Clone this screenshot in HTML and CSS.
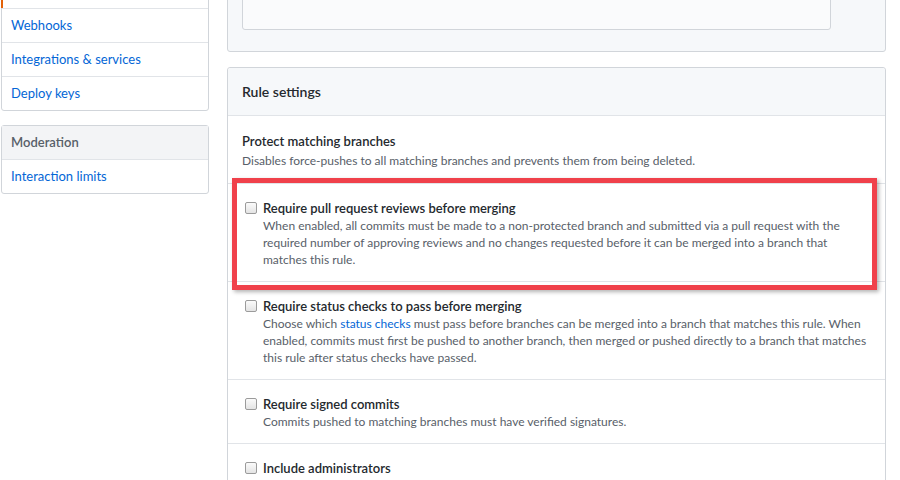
FILE: index.html
```html
<!DOCTYPE html>
<html lang="en">
<head>
<meta charset="utf-8">
<title>Branch protection rule</title>
<link rel="stylesheet" href="styles.css">
</head>
<body>
<div class="page">
  <nav class="sidebar">
    <div class="menu">
      <a class="menu-item selected stub" aria-label="Branches"></a>
      <a class="menu-item">Webhooks</a>
      <a class="menu-item">Integrations &amp; services</a>
      <a class="menu-item">Deploy keys</a>
    </div>
    <div class="menu menu-spaced">
      <h3 class="menu-heading">Moderation</h3>
      <a class="menu-item">Interaction limits</a>
    </div>
  </nav>

  <main class="content">
    <div class="box box-muted">
      <div class="input"></div>
    </div>

    <div class="box rules">
      <div class="box-header"><h3>Rule settings</h3></div>

      <div class="rule-intro">
        <div class="rule-title">Protect matching branches</div>
        <p class="rule-note">Disables force-pushes to all matching branches and prevents them from being deleted.</p>
      </div>

      <div class="rule">
        <span class="checkbox"></span>
        <div class="rule-body">
          <div class="rule-title">Require pull request reviews before merging</div>
          <p class="rule-note">When enabled, all commits must be made to a non-protected branch and submitted via a pull request with the required number of approving reviews and no changes requested before it can be merged into a branch that matches this rule.</p>
        </div>
      </div>

      <div class="rule">
        <span class="checkbox"></span>
        <div class="rule-body">
          <div class="rule-title">Require status checks to pass before merging</div>
          <p class="rule-note">Choose which <a class="link">status checks</a> must pass before branches can be merged into a branch that matches this rule. When enabled, commits must first be pushed to another branch, then merged or pushed directly to a branch that matches this rule after status checks have passed.</p>
        </div>
      </div>

      <div class="rule">
        <span class="checkbox"></span>
        <div class="rule-body">
          <div class="rule-title">Require signed commits</div>
          <p class="rule-note">Commits pushed to matching branches must have verified signatures.</p>
        </div>
      </div>

      <div class="rule">
        <span class="checkbox"></span>
        <div class="rule-body">
          <div class="rule-title">Include administrators</div>
        </div>
      </div>

      <div class="highlight"></div>
    </div>
  </main>
</div>
</body>
</html>
```

FILE: styles.css
```css
* { box-sizing: border-box; }

html, body {
  margin: 0;
  padding: 0;
  background: #ffffff;
  overflow: hidden;
}

body {
  font-family: Lato, "Liberation Sans", Arial, sans-serif;
  color: #24292e;
  width: 900px;
  height: 480px;
}

.page {
  display: flex;
  align-items: flex-start;
  margin-top: -20px;
  margin-left: 1px;
}

/* ---------- sidebar ---------- */
.sidebar {
  width: 208px;
  flex: none;
}

.menu {
  border: 1px solid #d1d5da;
  border-radius: 3px;
  background: #fff;
}

.menu-spaced { margin-top: 14px; }

.menu-item {
  position: relative;
  display: block;
  padding: 7px 9px;
  font-size: 13px;
  line-height: 19px;
  color: #0366d6;
  text-decoration: none;
  border-top: 1px solid #e1e4e8;
}

.menu > .menu-item:first-child { border-top: 0; }

.menu-item.stub {
  height: 27px;
  padding: 0;
}

.menu-item.selected::before {
  content: "";
  position: absolute;
  top: 0;
  bottom: 0;
  left: -1px;
  width: 2px;
  background: #e36209;
}

.menu-heading {
  margin: 0;
  padding: 7px 9px;
  font-size: 13px;
  line-height: 19px;
  font-weight: 600;
  color: #586069;
  background: #f3f4f6;
  border-bottom: 1px solid #e1e4e8;
}

.menu-heading + .menu-item { border-top: 0; }

/* ---------- content ---------- */
.content {
  width: 659px;
  margin-left: 18px;
  flex: none;
}

.box {
  border: 1px solid #d1d5da;
  border-radius: 3px;
  background: #fff;
}

.box-muted {
  background: #f6f8fa;
  padding: 15px 14px 21px;
}

.input {
  width: 589px;
  height: 34px;
  border: 1px solid #d1d5da;
  border-radius: 3px;
  background: #fafbfc;
}

.rules {
  position: relative;
  margin-top: 15px;
}

.box-header {
  padding: 14px 14px 13px;
  background: #f6f8fa;
  border-bottom: 1px solid #e1e4e8;
  border-radius: 3px 3px 0 0;
}

.box-header h3 {
  margin: 0;
  font-size: 14px;
  line-height: 20px;
  font-weight: 600;
}

.rule-intro {
  padding: 16px 14px 14px;
}

.rule-intro .rule-title { margin-bottom: 2px; }

.rule {
  display: flex;
  align-items: flex-start;
  padding: 15px 14px 13px;
  border-top: 1px solid #e1e4e8;
}

.checkbox {
  flex: none;
  width: 12px;
  height: 12px;
  margin: 3px 6px 0 3px;
  border: 1px solid #9b9b9b;
  border-radius: 2px;
  background: linear-gradient(#fbfbfb, #e4e4e4);
}

.rule-body { flex: 1; min-width: 0; }

.rule-title {
  font-size: 13px;
  line-height: 18px;
  font-weight: 600;
  color: #24292e;
}

.rule-note {
  margin: 0;
  font-size: 12px;
  line-height: 17px;
  color: #586069;
}

.link {
  color: #0366d6;
  text-decoration: none;
}

/* annotation overlay */
.highlight {
  position: absolute;
  left: 4px;
  top: 110px;
  width: 645px;
  height: 112px;
  border: 5px solid #f0414b;
  box-shadow: 2px 2px 4px rgba(0, 0, 0, 0.3);
  pointer-events: none;
}
```
